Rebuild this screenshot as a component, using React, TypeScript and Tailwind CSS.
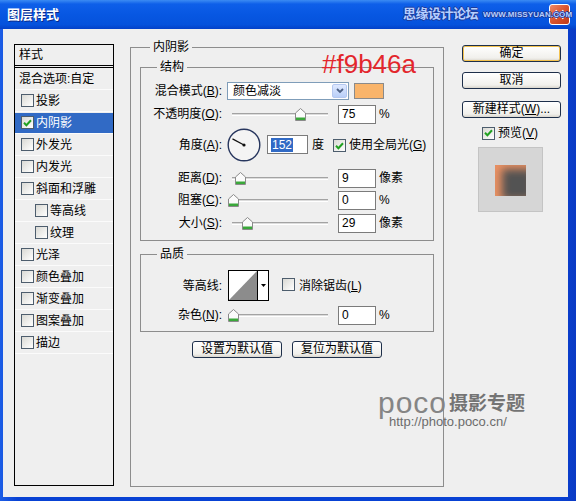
import React from 'react'

const font = "font-['Liberation_Sans','Noto_Sans_CJK_SC',sans-serif]"

// small xp style checkbox
function Check({ checked }: { checked?: boolean }) {
  return (
    <span className="inline-flex w-[13px] h-[13px] shrink-0 items-center justify-center border border-[#4d5d6d] bg-[linear-gradient(135deg,#d9d9d4,#ffffff)]">
      {checked && (
        <svg width="9" height="8" viewBox="0 0 9 8">
          <path d="M1 3.8 L3.4 6.2 L8 1.3" fill="none" stroke="#21a121" strokeWidth="2" />
        </svg>
      )}
    </span>
  )
}

function Field({ value, w = 'w-[38px]', selected }: { value: string; w?: string; selected?: boolean }) {
  return (
    <div className={`${w} h-[19px] shrink-0 flex items-center border border-[#7b7b7b] bg-white pl-[3px] text-[12px]`}>
      {selected ? <span className="bg-[#316ac5] text-white leading-[14px] px-[1px]">{value}</span> : value}
    </div>
  )
}

function Slider({ pos }: { pos: number }) {
  return (
    <div className="relative w-[106px] h-[20px] shrink-0 flex items-center">
      <div className="mx-[5px] w-[96px] h-[3px] border-t border-[#a3a3a3] border-b border-b-white bg-[#dcdcdc]" />
      <svg className="absolute top-[4px]" style={{ left: pos }} width="11" height="13" viewBox="0 0 11 13">
        <path d="M0.5 5 L5.5 0.5 L10.5 5 L10.5 12.5 L0.5 12.5 Z" fill="#fbfbfb" stroke="#8a8a8a" />
        <rect x="1" y="9.5" width="9" height="2.5" fill="#3aa83a" />
      </svg>
    </div>
  )
}

function Label({ children }: { children: React.ReactNode }) {
  return <div className="w-[81px] shrink-0 text-right text-[12px]">{children}</div>
}

function Btn({ children, w, def }: { children: React.ReactNode; w: string; def?: boolean }) {
  return (
    <div
      className={`${w} h-[17px] flex items-center justify-center rounded-[3px] border border-[#1e2f4a] bg-[linear-gradient(to_bottom,#ffffff,#f1f0ec_80%,#d9d5cc)] text-[12px] leading-[15px] ${
        def ? 'shadow-[inset_0_0_0_1px_#f3c24f]' : ''
      }`}
    >
      {children}
    </div>
  )
}

const styles = [
  { label: '投影' },
  { label: '内阴影', checked: true, selected: true },
  { label: '外发光' },
  { label: '内发光' },
  { label: '斜面和浮雕' },
  { label: '等高线', sub: true },
  { label: '纹理', sub: true },
  { label: '光泽' },
  { label: '颜色叠加' },
  { label: '渐变叠加' },
  { label: '图案叠加' },
  { label: '描边' },
]

export default function App() {
  return (
    <div className={`relative w-[576px] h-[501px] overflow-hidden flex flex-col bg-[linear-gradient(to_right,#1d5ee6,#0842d4_3%,#0842d4_97%,#0b3ac4)] ${font} text-black leading-[16px]`}>
      {/* title bar */}
      <div className="h-[29px] shrink-0 flex items-center justify-between pl-[7px] pr-[6px] bg-[linear-gradient(to_bottom,#3b8bf3_0%,#0e5fe9_14%,#0757e2_50%,#0552dc_85%,#0341c8_100%)]">
        <span className="text-white font-bold text-[13px] [text-shadow:1px_1px_0_#0a2a8a]">图层样式</span>
        <div className="w-[21px] h-[21px] rounded-[3px] border border-white bg-[linear-gradient(135deg,#ef8a6a,#d9532d_50%,#c03a18)] flex items-center justify-center">
          <svg width="11" height="11" viewBox="0 0 11 11">
            <path d="M1.5 1.5 L9.5 9.5 M9.5 1.5 L1.5 9.5" stroke="white" strokeWidth="2" />
          </svg>
        </div>
      </div>
      <span className="absolute left-[403px] top-[6px] text-[13px] font-bold text-[#b6cfff] tracking-[-0.5px] [text-shadow:1px_0_0_#1d3c9c,-1px_0_0_#1d3c9c,0_1px_0_#1d3c9c,0_-1px_0_#1d3c9c]">
        思缘设计论坛
      </span>
      <span className="absolute left-[483px] top-[10px] text-[8px] leading-[10px] font-bold text-[#b6cfff] tracking-[0.1px] [text-shadow:1px_0_0_#1d3c9c,-1px_0_0_#1d3c9c,0_1px_0_#1d3c9c,0_-1px_0_#1d3c9c]">
        WWW.MISSYUAN.COM
      </span>

      {/* client area */}
      <div className="ml-[3px] mr-[8px] mb-[4px] h-[468px] flex items-start pl-[11px] bg-[#efefef]">
        {/* style list */}
        <div className="mt-[15px] w-[100px] h-[442px] shrink-0 border border-black text-[12px]">
          <div className="h-[23px] border-b-[3px] border-double border-black pl-[4px] flex items-center">样式</div>
          <div className="h-[22px] border-b border-[#fbfbfb] pl-[4px] flex items-center">混合选项:自定</div>
          {styles.map((s) => (
            <div key={s.label} className="h-[22px] border-b border-[#fbfbfb] flex items-center">
              <div
                className={`w-full h-[20px] flex items-center gap-[1px] ${s.sub ? 'pl-[20px]' : 'pl-[6px]'} ${
                  s.selected ? 'bg-[#316ac5] text-white' : ''
                }`}
              >
                <Check checked={s.checked} />
                <span className="ml-[1px]">{s.label}</span>
              </div>
            </div>
          ))}
        </div>

        {/* inner shadow panel */}
        <fieldset className="mt-[10px] ml-[16px] w-[314px] h-[448px] shrink-0 border border-[#8d8d8d] px-[9px]">
          <legend className="ml-[10px] px-[3px] text-[12px] leading-[16px]">内阴影</legend>

          <fieldset className="mt-[4px] w-[294px] border border-[#8d8d8d] pt-[6px] pb-[7px]">
            <legend className="ml-[16px] px-[3px] text-[12px] leading-[16px]">结构</legend>

            <div className="h-[20px] flex items-center">
              <Label>
                混合模式(<u>B</u>):
              </Label>
              <div className="ml-[5px] w-[122px] h-[18px] flex items-center justify-between border border-[#7f9db9] bg-white">
                <span className="pl-[5px] text-[12px]">颜色减淡</span>
                <div className="mr-[1px] w-[15px] h-[14px] rounded-[2px] border border-[#b5c8f0] bg-[linear-gradient(to_bottom,#dfe9ff,#b9cff8)] flex items-center justify-center">
                  <svg width="8" height="6" viewBox="0 0 8 6">
                    <path d="M1 1 L4 4 L7 1" fill="none" stroke="#4d6185" strokeWidth="1.8" />
                  </svg>
                </div>
              </div>
              <div className="ml-[5px] w-[30px] h-[16px] border border-[#8a8a8a] bg-[#f9b46a]" />
            </div>

            <div className="mt-[3px] h-[20px] flex items-center">
              <Label>
                不透明度(<u>O</u>):
              </Label>
              <div className="ml-[5px]">
                <Slider pos={68} />
              </div>
              <div className="ml-[5px]">
                <Field value="75" />
              </div>
              <span className="ml-[3px] text-[12px]">%</span>
            </div>

            <div className="mt-[3px] h-[35px] flex items-center">
              <Label>
                角度(<u>A</u>):
              </Label>
              <svg className="ml-[5px] shrink-0" width="34" height="34" viewBox="0 0 34 34">
                <circle cx="17" cy="17" r="15.8" fill="#f4f4f4" stroke="#27365e" strokeWidth="1.4" />
                <path d="M17 17 L5.5 10.9" stroke="#111" strokeWidth="1.2" />
                <circle cx="17" cy="17" r="1.6" fill="#111" />
              </svg>
              <div className="ml-[6px]">
                <Field value="152" w="w-[41px]" selected />
              </div>
              <span className="ml-[4px] text-[12px]">度</span>
              <div className="ml-[9px]">
                <Check checked />
              </div>
              <span className="ml-[3px] text-[12px]">
                使用全局光(<u>G</u>)
              </span>
            </div>

            <div className="mt-[6px] h-[20px] flex items-center">
              <Label>
                距离(<u>D</u>):
              </Label>
              <div className="ml-[5px]">
                <Slider pos={8} />
              </div>
              <div className="ml-[5px]">
                <Field value="9" />
              </div>
              <span className="ml-[3px] text-[12px]">像素</span>
            </div>

            <div className="mt-[2px] h-[20px] flex items-center">
              <Label>
                阻塞(<u>C</u>):
              </Label>
              <div className="ml-[5px]">
                <Slider pos={1} />
              </div>
              <div className="ml-[5px]">
                <Field value="0" />
              </div>
              <span className="ml-[3px] text-[12px]">%</span>
            </div>

            <div className="mt-[3px] h-[20px] flex items-center">
              <Label>
                大小(<u>S</u>):
              </Label>
              <div className="ml-[5px]">
                <Slider pos={15} />
              </div>
              <div className="ml-[5px]">
                <Field value="29" />
              </div>
              <span className="ml-[3px] text-[12px]">像素</span>
            </div>
          </fieldset>

          <fieldset className="mt-[5px] w-[294px] border border-[#8d8d8d] pt-[8px] pb-[6px]">
            <legend className="ml-[16px] px-[3px] text-[12px] leading-[16px]">品质</legend>

            <div className="h-[31px] flex items-center">
              <Label>等高线:</Label>
              <div className="ml-[6px] w-[41px] h-[31px] shrink-0 flex border border-black bg-white">
                <svg width="28" height="29" viewBox="0 0 28 29">
                  <path d="M0 29 L28 0 L28 29 Z" fill="#8c8c8c" />
                </svg>
                <div className="flex-1 border-l border-black flex items-center justify-center">
                  <svg width="5" height="3" viewBox="0 0 5 3">
                    <path d="M0 0 L5 0 L2.5 3 Z" fill="#000" />
                  </svg>
                </div>
              </div>
              <div className="ml-[13px]">
                <Check />
              </div>
              <span className="ml-[4px] text-[12px]">
                消除锯齿(<u>L</u>)
              </span>
            </div>

            <div className="mt-[4px] h-[20px] flex items-center">
              <Label>
                杂色(<u>N</u>):
              </Label>
              <div className="ml-[5px]">
                <Slider pos={1} />
              </div>
              <div className="ml-[5px]">
                <Field value="0" />
              </div>
              <span className="ml-[3px] text-[12px]">%</span>
            </div>
          </fieldset>

          <div className="mt-[9px] flex justify-center gap-[10px]">
            <Btn w="w-[90px]">设置为默认值</Btn>
            <Btn w="w-[90px]">复位为默认值</Btn>
          </div>
        </fieldset>

        {/* right column */}
        <div className="mt-[16px] ml-[18px] w-[99px] shrink-0 flex flex-col">
          <Btn w="w-[99px]" def>
            确定
          </Btn>
          <div className="mt-[10px]">
            <Btn w="w-[99px]">取消</Btn>
          </div>
          <div className="mt-[12px]">
            <Btn w="w-[99px]">
              新建样式(<u>W</u>)...
            </Btn>
          </div>
          <div className="mt-[7px] ml-[20px] h-[16px] flex items-center text-[12px]">
            <Check checked />
            <span className="ml-[3px]">
              预览(<u>V</u>)
            </span>
          </div>
          <div className="mt-[6px] ml-[16px] w-[65px] h-[65px] border border-[#c4c4c4] bg-[#d6d6d6] pl-[16px] pt-[17px]">
            <div className="w-[31px] h-[31px] bg-[#535353] shadow-[inset_7px_4px_8px_rgba(246,150,100,0.95)]" />
          </div>
        </div>
      </div>

      {/* overlays: annotation + watermark */}
      <span className="absolute left-[322px] top-[51px] text-[26px] leading-[26px] text-[#e3262c]">#f9b46a</span>
      <span className="absolute left-[378px] top-[391px] text-[30px] leading-[24px] tracking-[1px] text-[#858585]">poco</span>
      <span className="absolute left-[449px] top-[394px] text-[19px] leading-[19px] font-bold text-[#747474]">摄影专题</span>
      <span className="absolute left-[389px] top-[416px] text-[13px] leading-[12px] text-[#6c6c6c]">http://photo.poco.cn/</span>
    </div>
  )
}
